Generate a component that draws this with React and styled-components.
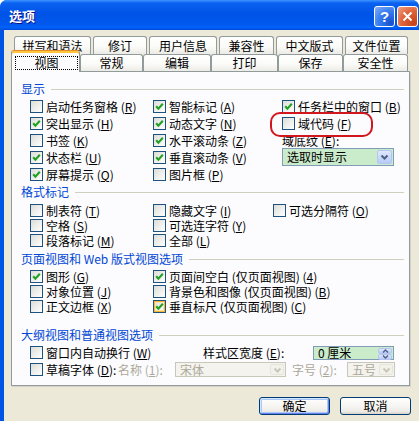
import React from 'react';
import styled, { createGlobalStyle, css } from 'styled-components';

const FONT = `"Noto Sans CJK SC", "Noto Sans", sans-serif`;

const Global = createGlobalStyle`
  html, body { margin: 0; padding: 0; background: #ffffff; }
  body { font-family: ${FONT}; }
`;

const Window = styled.div`
  width: 419px;
  height: 421px;
  display: flex;
  flex-direction: column;
  background: #0054e3;
  border-radius: 7px 7px 0 0;
  overflow: hidden;
  font-family: ${FONT};
  font-size: 12px;
  color: #000;
`;

const TitleBar = styled.div`
  height: 30px;
  flex: none;
  display: flex;
  align-items: center;
  justify-content: space-between;
  padding: 0 1px 0 9px;
  background: linear-gradient(
    180deg,
    #3d95ff 0%,
    #0a62f0 10%,
    #0053e6 45%,
    #0058ee 80%,
    #0062f8 92%,
    #0048d8 100%
  );
`;

const Title = styled.span`
  color: #fff;
  font-weight: bold;
  font-size: 13px;
  line-height: 1;
  text-shadow: 1px 1px #0f1089;
`;

const Caption = styled.div`
  display: flex;
  gap: 2px;
  margin-top: 2px;
`;

const CaptionBtn = styled.div`
  width: 21px;
  height: 21px;
  box-sizing: border-box;
  border: 1px solid #fff;
  border-radius: 3px;
  display: flex;
  align-items: center;
  justify-content: center;
  color: #fff;
  font-family: "Liberation Sans", sans-serif;
  font-weight: bold;
  font-size: 15px;
  ${(p) =>
    p.$close
      ? css`
          background: radial-gradient(circle at 85% 85%, #c44217 0%, #e0653c 55%, #f3a486 100%);
        `
      : css`
          background: radial-gradient(circle at 85% 85%, #1550d0 0%, #3a7ef0 55%, #86b0f7 100%);
        `}
`;

const Body = styled.div`
  flex: 1;
  margin-left: 4px;
  background: #ece9d8;
  padding: 6px 0 0 7px;
  display: flex;
  flex-direction: column;
`;

const TabRow = styled.div`
  display: flex;
  align-items: flex-start;
  height: ${(p) => p.$h}px;
  margin-left: ${(p) => p.$indent}px;
  gap: ${(p) => p.$gap}px;
`;

const Tab = styled.div`
  box-sizing: border-box;
  flex: none;
  width: ${(p) => p.$w}px;
  height: 100%;
  border: 1px solid #919b9c;
  border-bottom: none;
  border-radius: 3px 3px 0 0;
  background: linear-gradient(180deg, #ffffff 0%, #fbfbf9 55%, #ecebe5 100%);
  display: flex;
  align-items: center;
  justify-content: center;
  line-height: 1;
  white-space: nowrap;
`;

const ActiveTab = styled(Tab)`
  position: relative;
  z-index: 2;
  height: 22px;
  margin-top: -4px;
  align-items: flex-start;
  padding: 5px 1px 0 3px;
  background: #fcfcfe;
  border-top: 1px solid #e68b2c;
  box-shadow: inset 0 2px 0 #ffc73c;
`;

const Focus = styled.span`
  flex: 1;
  height: 14px;
  box-sizing: border-box;
  border: 1px dotted #000;
  display: flex;
  align-items: center;
  justify-content: center;
`;

const Panel = styled.div`
  position: relative;
  box-sizing: border-box;
  width: 399px;
  height: 315px;
  flex: none;
  border: 1px solid #919b9c;
  background: #fcfcfe;
  padding: 10px 5px 0 9px;
  box-shadow: 1px 1px 0 #d6d3c6;
`;

const Section = styled.div`
  margin-top: ${(p) => p.$top}px;
`;

const Header = styled.div`
  display: flex;
  align-items: center;
  height: 14px;
  line-height: 14px;
  color: #0046d5;
  white-space: nowrap;
  &::after {
    content: '';
    flex: 1;
    height: 1px;
    background: #d0d0bf;
    margin-left: 6px;
  }
`;

const Grid = styled.div`
  display: grid;
  grid-template-columns: ${(p) => p.$cols};
  grid-auto-rows: ${(p) => p.$row}px;
  margin-top: ${(p) => p.$gap}px;
  padding-left: 9px;
  align-items: center;
`;

const Item = styled.div`
  display: flex;
  align-items: center;
  gap: 3px;
  white-space: nowrap;
  line-height: 13px;
  color: ${(p) => (p.$disabled ? '#aca899' : '#000')};
`;

const Box = styled.span`
  flex: none;
  width: 13px;
  height: 13px;
  box-sizing: border-box;
  border: 1px solid #1c5180;
  background: linear-gradient(135deg, #dcdcd7 0%, #ffffff 100%);
  display: flex;
  align-items: center;
  justify-content: center;
  ${(p) =>
    p.$hover &&
    css`
      box-shadow: inset 0 0 0 1px #f8b636, inset 0 0 0 2px #fee6a8;
    `}
`;

const Key = styled.span`
  text-decoration: underline;
  text-underline-offset: 1px;
`;

const Label = styled.span`
  color: ${(p) => (p.$disabled ? '#aca899' : '#000')};
  white-space: nowrap;
  line-height: 12px;
  align-self: center;
`;

const Combo = styled.div`
  box-sizing: border-box;
  width: ${(p) => p.$w}px;
  height: ${(p) => p.$h}px;
  border: 1px solid ${(p) => (p.$disabled ? '#c9c7ba' : '#7f9db9')};
  background: ${(p) => (p.$disabled ? '#f4f3ee' : '#cbeccb')};
  color: ${(p) => (p.$disabled ? '#aca899' : '#000')};
  display: flex;
  align-items: stretch;
  padding: 1px;
  line-height: 1;
  white-space: nowrap;
  align-self: ${(p) => (p.$end ? 'end' : 'center')};
`;

const ComboText = styled.span`
  flex: 1;
  display: flex;
  align-items: center;
  padding-left: 3px;
`;

const ArrowBtn = styled.span`
  flex: none;
  width: ${(p) => p.$w || 15}px;
  box-sizing: border-box;
  border-radius: 2px;
  border: 1px solid ${(p) => (p.$disabled ? '#e6e5dc' : '#b4c6f0')};
  background: ${(p) =>
    p.$disabled
      ? '#f2f1ea'
      : 'linear-gradient(180deg, #dfe8fd 0%, #c7d6fa 60%, #b8cbf7 100%)'};
  display: flex;
  align-items: center;
  justify-content: center;
`;

const SpinBtns = styled.span`
  flex: none;
  width: 14px;
  display: flex;
  flex-direction: column;
`;

const SpinBtn = styled(ArrowBtn)`
  flex: 1;
  width: 14px;
`;

const CustomRow = styled.div`
  display: grid;
  grid-template-columns: ${(p) => p.$cols};
  height: 17px;
  margin-top: ${(p) => p.$top || 0}px;
  padding-left: 9px;
  align-items: center;
`;

const Indented = styled.span`
  padding-left: ${(p) => p.$pad}px;
  color: #aca899;
  white-space: nowrap;
`;

const Annotation = styled.div`
  position: absolute;
  left: 258px;
  top: 40px;
  width: 103px;
  height: 25px;
  box-sizing: border-box;
  border: 2.5px solid #d2161e;
  border-radius: 10px;
  pointer-events: none;
`;

const ButtonRow = styled.div`
  display: flex;
  justify-content: flex-end;
  gap: 10px;
  margin-top: 11px;
  padding-right: 8px;
`;

const Button = styled.button`
  width: 71px;
  height: 18px;
  box-sizing: border-box;
  padding: 0;
  font-family: ${FONT};
  font-size: 12px;
  line-height: 1;
  color: #000;
  border: 1px solid #003c74;
  border-radius: 3px;
  background: linear-gradient(180deg, #ffffff 0%, #f5f4f0 55%, #ecebe6 85%, #d6d0c5 100%);
  ${(p) =>
    p.$default &&
    css`
      box-shadow: inset 1px 1px 0 #cee7ff, inset -1px -1px 0 #6982ee, inset 0 0 0 2px #aac8f8;
    `}
`;

const Check = () => (
  <svg width="9" height="9" viewBox="0 0 9 9">
    <polyline points="1.2,4.2 3.4,6.6 7.8,1.8" fill="none" stroke="#21a121" strokeWidth="2.1" />
  </svg>
);

const Chevron = ({ color = '#4d6185', up = false, small = false }) => {
  const w = small ? 7 : 9;
  const h = small ? 4 : 6;
  const pts = up
    ? small
      ? '1,3.5 3.5,1 6,3.5'
      : '1.5,4.5 4.5,1.5 7.5,4.5'
    : small
    ? '1,0.5 3.5,3 6,0.5'
    : '1.5,1.5 4.5,4.5 7.5,1.5';
  return (
    <svg width={w} height={h} viewBox={`0 0 ${w} ${h}`}>
      <polyline points={pts} fill="none" stroke={color} strokeWidth={small ? 1.4 : 2} />
    </svg>
  );
};

const Mn = ({ text, k, suffix = '' }) => (
  <>
    {text} (<Key>{k}</Key>){suffix}
  </>
);

const CheckItem = ({ on, hover, text, k, suffix }) => (
  <Item>
    <Box $hover={hover}>{on && <Check />}</Box>
    <span>
      <Mn text={text} k={k} suffix={suffix} />
    </span>
  </Item>
);

const row1Tabs = [
  ['拼写和语法', 77],
  ['修订', 54],
  ['用户信息', 68],
  ['兼容性', 55],
  ['中文版式', 67],
  ['文件位置', 63],
];

const row2Tabs = [
  ['常规', 63],
  ['编辑', 68],
  ['打印', 67],
  ['保存', 65],
  ['安全性', 65],
];

export default function App() {
  return (
    <>
      <Global />
      <Window>
        <TitleBar>
          <Title>选项</Title>
          <Caption>
            <CaptionBtn>?</CaptionBtn>
            <CaptionBtn $close>
              <svg width="11" height="11" viewBox="0 0 11 11">
                <path d="M1.5 1.5 L9.5 9.5 M9.5 1.5 L1.5 9.5" stroke="#fff" strokeWidth="2" />
              </svg>
            </CaptionBtn>
          </Caption>
        </TitleBar>
        <Body>
          <TabRow $h={18} $indent={3} $gap={2}>
            {row1Tabs.map(([t, w]) => (
              <Tab key={t} $w={w}>
                {t}
              </Tab>
            ))}
          </TabRow>
          <TabRow $h={17} $indent={0} $gap={0}>
            <ActiveTab $w={69}>
              <Focus>视图</Focus>
            </ActiveTab>
            {row2Tabs.map(([t, w]) => (
              <Tab key={t} $w={w}>
                {t}
              </Tab>
            ))}
          </TabRow>
          <Panel>
            <Section $top={0}>
              <Header>显示</Header>
              <Grid $cols="123px 129px 1fr" $row={17} $gap={2}>
                <CheckItem text="启动任务窗格" k="R" />
                <CheckItem on text="智能标记" k="A" />
                <CheckItem on text="任务栏中的窗口" k="B" />
                <CheckItem on text="突出显示" k="H" />
                <CheckItem on text="动态文字" k="N" />
                <CheckItem text="域代码" k="F" />
                <CheckItem text="书签" k="K" />
                <CheckItem on text="水平滚动条" k="Z" />
                <Label>
                  <Mn text="域底纹" k="E" suffix=":" />
                </Label>
                <CheckItem on text="状态栏" k="U" />
                <CheckItem on text="垂直滚动条" k="V" />
                <Combo $w={112} $h={18} $end>
                  <ComboText>选取时显示</ComboText>
                  <ArrowBtn>
                    <Chevron />
                  </ArrowBtn>
                </Combo>
                <CheckItem on text="屏幕提示" k="Q" />
                <CheckItem text="图片框" k="P" />
              </Grid>
            </Section>

            <Section $top={2}>
              <Header>格式标记</Header>
              <Grid $cols="123px 120px 1fr" $row={15} $gap={4}>
                <CheckItem text="制表符" k="T" />
                <CheckItem text="隐藏文字" k="I" />
                <CheckItem text="可选分隔符" k="O" />
                <CheckItem text="空格" k="S" />
                <CheckItem text="可选连字符" k="Y" />
                <span />
                <CheckItem text="段落标记" k="M" />
                <CheckItem text="全部" k="L" />
              </Grid>
            </Section>

            <Section $top={4}>
              <Header>页面视图和 Web 版式视图选项</Header>
              <Grid $cols="123px 1fr" $row={15} $gap={3}>
                <CheckItem on text="图形" k="G" />
                <CheckItem on text="页面间空白 (仅页面视图)" k="4" />
                <CheckItem text="对象位置" k="J" />
                <CheckItem text="背景色和图像 (仅页面视图)" k="B" />
                <CheckItem text="正文边框" k="X" />
                <CheckItem on hover text="垂直标尺 (仅页面视图)" k="C" />
              </Grid>
            </Section>

            <Section $top={14}>
              <Header>大纲视图和普通视图选项</Header>
              <CustomRow $cols="173px 110px 81px" $top={2}>
                <CheckItem text="窗口内自动换行" k="W" />
                <Label>
                  <Mn text="样式区宽度" k="E" suffix=":" />
                </Label>
                <Combo $w={81} $h={14}>
                  <ComboText>0 厘米</ComboText>
                  <SpinBtns>
                    <SpinBtn>
                      <Chevron up small />
                    </SpinBtn>
                    <SpinBtn>
                      <Chevron small />
                    </SpinBtn>
                  </SpinBtns>
                </Combo>
              </CustomRow>
              <CustomRow $cols="88px 57px 111px 61px 48px">
                <CheckItem text="草稿字体" k="D" suffix=":" />
                <Indented $pad={0}>
                  <Mn text="名称" k="1" suffix=":" />
                </Indented>
                <Combo $w={111} $h={15} $disabled>
                  <ComboText>宋体</ComboText>
                  <ArrowBtn $disabled $w={14}>
                    <Chevron color="#c9c7ba" />
                  </ArrowBtn>
                </Combo>
                <Indented $pad={6}>
                  <Mn text="字号" k="2" suffix=":" />
                </Indented>
                <Combo $w={48} $h={15} $disabled>
                  <ComboText>五号</ComboText>
                  <ArrowBtn $disabled $w={14}>
                    <Chevron color="#c9c7ba" />
                  </ArrowBtn>
                </Combo>
              </CustomRow>
            </Section>
            <Annotation />
          </Panel>
          <ButtonRow>
            <Button $default>确定</Button>
            <Button>取消</Button>
          </ButtonRow>
        </Body>
      </Window>
    </>
  );
}
